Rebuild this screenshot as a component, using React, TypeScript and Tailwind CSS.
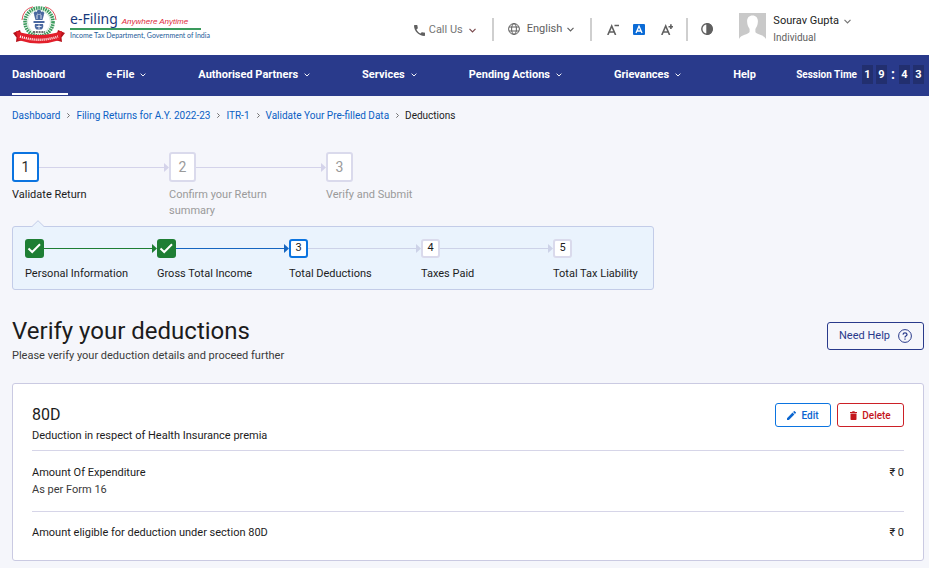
import clsx from 'clsx';

const menuItems = [
  { label: 'e-File', hasMenu: true },
  { label: 'Authorised Partners', hasMenu: true },
  { label: 'Services', hasMenu: true },
  { label: 'Pending Actions', hasMenu: true },
  { label: 'Grievances', hasMenu: true },
  { label: 'Help', hasMenu: false },
];

const crumbs = ['Dashboard', 'Filing Returns for A.Y. 2022-23', 'ITR-1', 'Validate Your Pre-filled Data'];

const steps = ['Validate Return', 'Confirm your Return summary', 'Verify and Submit'];

const subSteps = [
  { label: 'Personal Information', state: 'done', line: 'text-[#1e7e34]' },
  { label: 'Gross Total Income', state: 'done', line: 'text-[#1565c0]' },
  { label: 'Total Deductions', state: 'active', line: 'text-[#cdd2e8]' },
  { label: 'Taxes Paid', state: 'todo', line: 'text-[#cdd2e8]' },
  { label: 'Total Tax Liability', state: 'todo', line: '' },
];

function Chevron({ className }: { className?: string }) {
  return (
    <svg className={clsx('shrink-0', className)} viewBox="0 0 7 5" fill="none" stroke="currentColor" strokeWidth="1.2">
      <path d="M0.5 0.8L3.5 3.8L6.5 0.8" />
    </svg>
  );
}

function Arrow({ className }: { className: string }) {
  return (
    <span className={clsx('flex h-[9px] flex-1 items-center', className)}>
      <span className="h-px flex-1 bg-current" />
      <svg className="h-[9px] w-[5px]" viewBox="0 0 5 9" fill="currentColor">
        <path d="M0 0L5 4.5L0 9Z" />
      </svg>
    </span>
  );
}

function Emblem() {
  return (
    <svg className="h-[38px] w-[52px] shrink-0" viewBox="0 0 52 38" fill="none">
      <circle cx="26" cy="16" r="14" stroke="#3a9a5c" strokeWidth="3.6" strokeDasharray="1.6 0.8" />
      <circle cx="26" cy="16" r="11.5" fill="#fff" stroke="#b7d8c2" strokeWidth="0.6" />
      <path d="M9 14Q10 3 20 0.8" stroke="#e0525b" strokeWidth="1" />
      <path d="M43 14Q42 3 32 0.8" stroke="#e0525b" strokeWidth="1" />
      <g fill="#4a68a0">
        <circle cx="26" cy="6" r="2.2" />
        <circle cx="22.6" cy="7.4" r="1.8" />
        <circle cx="29.4" cy="7.4" r="1.8" />
        <path d="M21 8.5H31L29.5 14H22.5Z" />
        <path d="M20.5 15H31.5V17H20.5Z" />
        <path d="M22 18H30Q31 21.5 28.5 23.5H23.5Q21 21.5 22 18Z" />
      </g>
      <path d="M24 9V13M28 9V13M26 18.5V23M23.5 20.5H28.5" stroke="#fff" strokeWidth="0.8" />
      <path d="M20 26H32" stroke="#434343" strokeWidth="1.6" strokeDasharray="2 0.8" />
      <path d="M0 27L7 24L10 34L3 36L3.5 31.5Z" fill="#b5121b" />
      <path d="M52 27L45 24L42 34L49 36L48.5 31.5Z" fill="#b5121b" />
      <path d="M3 25Q26 33 49 25L47 34Q26 41 5 34Z" fill="#e21f2b" />
      <path d="M7 30.5Q26 37 45 30.5" stroke="#fff" strokeWidth="2.4" strokeDasharray="1 1" />
    </svg>
  );
}

function Header() {
  return (
    <header className="flex h-[55px] bg-white pl-[13px] text-[11px] whitespace-nowrap text-[#606060]">
      <a href="#" className="flex shrink-0 pt-[6px]">
        <Emblem />
        <span className="ml-[5px] mt-[3px] flex w-[131px] flex-col">
          <span className="flex h-[21px] items-baseline border-b-2 border-[#3a9a5c]">
            <span className="font-[Noto_Sans,sans-serif] text-[14px] leading-5 text-[#16387c]">e-Filing</span>
            <span className="ml-1 font-[Liberation_Sans,sans-serif] text-[8px] italic text-[#e0283a]">
              Anywhere Anytime
            </span>
          </span>
          <span className="font-[Lato,sans-serif] text-[7px] leading-[11px] text-[#1d5a98]">
            Income Tax Department, Government of India
          </span>
        </span>
      </a>

      <div className="ml-auto flex pt-[18px]">
        <button className="flex h-6 items-center text-[#757575]">
          <svg className="mr-1 h-[11px] w-[11px]" viewBox="3 3 18 18" fill="#606060">
            <path d="M20.01 15.38c-1.23 0-2.42-.2-3.53-.56a.977.977 0 0 0-1.01.24l-1.57 1.97c-2.83-1.35-5.48-3.9-6.89-6.83l1.95-1.66c.27-.28.35-.67.24-1.02-.37-1.11-.56-2.3-.56-3.53 0-.54-.45-.99-.99-.99H4.19C3.65 3 3 3.24 3 3.99 3 13.28 10.73 21 20.01 21c.71 0 .99-.63.99-1.18v-3.45c0-.54-.45-.99-.99-.99z" />
          </svg>
          Call Us
          <Chevron className="ml-[6px] h-[5px] w-[7px] text-[#7a4a4e]" />
        </button>
        <span className="ml-4 mr-[14px] h-[23px] w-[2px] bg-[#cfcfcf]" />
        <button className="flex h-6 items-center pb-[2px]">
          <svg className="mr-[7px] h-3 w-3" viewBox="0 0 12 12" fill="none" stroke="currentColor">
            <circle cx="6" cy="6" r="5.4" />
            <ellipse cx="6" cy="6" rx="2.4" ry="5.4" />
            <path d="M1 4H11M1 8H11" />
          </svg>
          English
          <Chevron className="ml-[5px] h-[5px] w-[7px]" />
        </button>
        <span className="ml-4 mr-[15px] h-[23px] w-[2px] bg-[#cfcfcf]" />
        <div className="flex h-[22px] items-center">
          <button aria-label="Decrease text size">
            <svg className="h-[11px] w-3" viewBox="0 0 12 11" fill="none" stroke="currentColor" strokeWidth="1.6">
              <path d="M0.8 11L4.7 2L8.6 11M2.3 8H7.1M7.5 1.5H12" />
            </svg>
          </button>
          <button aria-label="Normal text size" className="ml-[14px]">
            <svg className="h-[11px] w-3" viewBox="0 0 12 11" fill="none">
              <rect width="12" height="11" rx="1" fill="#0b6bd6" />
              <path d="M3 9L6 2.2L9 9M4 7H8" stroke="#fff" strokeWidth="1.3" />
            </svg>
          </button>
          <button aria-label="Increase text size" className="ml-4">
            <svg className="h-[11px] w-3" viewBox="0 0 12 11" fill="none" stroke="currentColor" strokeWidth="1.6">
              <path d="M0.8 11L4.7 2L8.6 11M2.3 8H7.1M7.5 2.7H12.3M9.9 0.3V5.1" />
            </svg>
          </button>
        </div>
        <span className="mx-[13px] h-[23px] w-[2px] bg-[#cfcfcf]" />
        <button aria-label="Contrast" className="flex h-[22px] items-center">
          <svg className="h-3 w-3" viewBox="0 0 12 12" fill="none" stroke="currentColor" strokeWidth="1.4">
            <circle cx="6" cy="6" r="5.2" />
            <path d="M6 0.8A5.2 5.2 0 0 1 6 11.2Z" fill="currentColor" />
          </svg>
        </button>
      </div>

      <div className="ml-[26px] mr-[78px] flex pt-[13px]">
        <svg className="h-[27px] w-[27px] bg-[#c9c9c9]" viewBox="0 0 27 27" fill="#fff">
          <path d="M13.5 2.5C17 2.5 19 5 18.9 8.6C18.8 12 17.5 14.5 16.4 16V19C17.5 21.5 25 21.5 27 26V27H0V26C2 21.5 9.5 21.5 10.6 19V16C9.5 14.5 8.2 12 8.1 8.6C8 5 10 2.5 13.5 2.5Z" />
        </svg>
        <div className="ml-[7px]">
          <button className="flex h-[17px] items-center text-[#1c1c1c]">
            Sourav Gupta
            <Chevron className="ml-[5px] h-[5px] w-[7px] text-[#757575]" />
          </button>
          <p className="text-[10px] leading-4">Individual</p>
        </div>
      </div>
    </header>
  );
}

function NavBar() {
  return (
    <nav className="flex h-[41px] items-stretch bg-[#293a8b] pl-3 pr-[5px] text-[11px] font-bold whitespace-nowrap text-white">
      <a href="#" className="mb-px border-b-2 border-white pr-[3px] leading-[39px]">
        Dashboard
      </a>
      <div className="ml-[38px] flex items-center gap-[52px] pb-px">
        {menuItems.map(item =>
          item.hasMenu ? (
            <button key={item.label} className="flex items-center">
              {item.label}
              <Chevron className="ml-[6px] h-1 w-[6px]" />
            </button>
          ) : (
            <a key={item.label} href="#">
              {item.label}
            </a>
          )
        )}
      </div>
      <div className="ml-auto flex items-center gap-[3px] pb-[3px]">
        <span className="mr-[2px] text-[10px]">Session Time</span>
        {['1', '9', ':', '4', '3'].map((char, i) => (
          <span
            key={i}
            className={clsx('text-center leading-[19px]', char === ':' ? 'w-[6px] text-sm' : 'w-[11px] bg-[#222f6f]')}
          >
            {char}
          </span>
        ))}
      </div>
    </nav>
  );
}

function Breadcrumbs() {
  return (
    <ol className="flex h-[38px] items-center text-[10px] text-[#0b5fc4]">
      {crumbs.map(crumb => (
        <li key={crumb} className="flex items-center">
          <a href="#">{crumb}</a>
          <svg className="ml-[7px] mr-[6px] h-[5px] w-[3px]" viewBox="0 0 3 5" fill="none" stroke="#707070">
            <path d="M0.3 0.3L2.5 2.5L0.3 4.7" />
          </svg>
        </li>
      ))}
      <li className="text-[#1c1c1c]">Deductions</li>
    </ol>
  );
}

function Steps() {
  return (
    <ol className="mt-[18px] flex text-[11px]">
      {steps.map((label, i) => (
        <li key={label} className="w-[157px]">
          <div className="flex items-center">
            <span
              className={clsx(
                'flex h-[30px] w-[27px] items-center justify-center rounded-[3px] border-2 bg-white text-sm',
                i === 0 ? 'border-[#0b74e0] text-[#2c2c2c]' : 'border-[#dadaec] text-[#9a9a9a]'
              )}
            >
              {i + 1}
            </span>
            {i < steps.length - 1 && <Arrow className="text-[#d4d3ea]" />}
          </div>
          <p className={clsx('mt-[5px] w-[120px] leading-4', i === 0 ? 'text-[#1c1c1c]' : 'text-[#9a9a9a]')}>{label}</p>
        </li>
      ))}
    </ol>
  );
}

function SubSteps() {
  return (
    <div className="relative mt-[7px] w-[642px] rounded-[3px] border border-[#c3cce8] bg-[#eaf3fd] pb-[7px] pl-3 pt-3">
      <svg className="absolute -top-[7px] left-[18px] h-[7px] w-[14px]" viewBox="0 0 14 7" fill="#eaf3fd" stroke="#c3cce8">
        <path d="M0.5 7L7 0.7L13.5 7" />
      </svg>
      <ol className="flex text-[11px] text-[#1c1c1c]">
        {subSteps.map((step, i) => (
          <li key={step.label} className={step.line ? 'w-[132px] shrink-0' : 'flex-1'}>
            <div className="flex items-center">
              {step.state === 'done' ? (
                <svg className="h-[19px] w-[19px] rounded-[3px] bg-[#1e7e34]" viewBox="0 0 19 19" fill="none" stroke="#fff" strokeWidth="2">
                  <path d="M3.5 9.5L7.2 13L15 5.2" />
                </svg>
              ) : (
                <span
                  className={clsx(
                    'flex h-[19px] w-[19px] items-center justify-center rounded-[3px] border-2 bg-white',
                    step.state === 'active' ? 'border-[#0b74e0]' : 'border-[#dadaec]'
                  )}
                >
                  {i + 1}
                </span>
              )}
              {step.line && <Arrow className={step.line} />}
            </div>
            <p className="mt-2 leading-4">{step.label}</p>
          </li>
        ))}
      </ol>
    </div>
  );
}

function DeductionCard() {
  return (
    <section className="mt-[18px] rounded-[3px] border border-[#cacae2] bg-white px-[19px] text-[11px] text-[#1c1c1c]">
      <div className="flex items-start justify-between border-b border-[#d6d5e8] pb-[6px] pt-[19px]">
        <div>
          <h2 className="text-base leading-6">80D</h2>
          <p className="leading-[17px]">Deduction in respect of Health Insurance premia</p>
        </div>
        <div className="flex gap-[6px] text-[10px] font-medium">
          <button className="flex h-6 w-14 items-center justify-center gap-[5px] rounded-[3px] border border-[#0b74e0] text-[#0b66d0]">
            <svg className="h-[9px] w-[9px]" viewBox="3 3 18 18" fill="currentColor">
              <path d="M3 17.25V21h3.75L17.81 9.94l-3.75-3.75L3 17.25zM20.71 7.04a1 1 0 0 0 0-1.41l-2.34-2.34a1 1 0 0 0-1.41 0l-1.83 1.83 3.75 3.75 1.83-1.83z" />
            </svg>
            Edit
          </button>
          <button className="flex h-6 w-[67px] items-center justify-center gap-[5px] rounded-[3px] border border-[#cc2027] text-[#c4161c]">
            <svg className="h-[9px] w-[7px]" viewBox="0 0 7 9" fill="currentColor">
              <path d="M0 1H2L2.6 0.3H4.4L5 1H7V2H0ZM0.5 2.6H6.5V8.2Q6.5 9 5.7 9H1.3Q0.5 9 0.5 8.2Z" />
            </svg>
            Delete
          </button>
        </div>
      </div>
      <div className="flex justify-between border-b border-[#d6d5e8] py-[13px] leading-[17px]">
        <div>
          <h3>Amount Of Expenditure</h3>
          <p className="text-[#3a3a3a]">As per Form 16</p>
        </div>
        <span>₹ 0</span>
      </div>
      <div className="flex justify-between pb-[19px] pt-3 leading-[17px]">
        <h3>Amount eligible for deduction under section 80D</h3>
        <span>₹ 0</span>
      </div>
    </section>
  );
}

export default function App() {
  return (
    <div className="min-h-screen bg-[#f5f6fb] font-[Roboto,sans-serif]">
      <Header />
      <NavBar />
      <main className="pb-[7px] pl-3 pr-[5px]">
        <Breadcrumbs />
        <Steps />
        <SubSteps />
        <div className="mt-[25px] flex items-start justify-between">
          <div>
            <h1 className="text-2xl leading-8 text-[#1c1c1c]">Verify your deductions</h1>
            <p className="text-[11px] leading-[18px] text-[#3a3a3a]">Please verify your deduction details and proceed further</p>
          </div>
          <button className="mt-[7px] flex h-7 w-[97px] items-center justify-center gap-2 rounded-[3px] border border-[#293a8b] text-[11px] text-[#293a8b]">
            Need Help
            <svg className="h-[14px] w-[14px]" viewBox="0 0 14 14" fill="none" stroke="currentColor">
              <circle cx="7" cy="7" r="6.4" />
              <path d="M5 5.6Q5.1 3.8 7 3.8T9 5.4Q9 6.4 7.9 7Q7 7.5 7 8.5M7 9.6V10.8" strokeWidth="1.2" />
            </svg>
          </button>
        </div>
        <DeductionCard />
      </main>
    </div>
  );
}
